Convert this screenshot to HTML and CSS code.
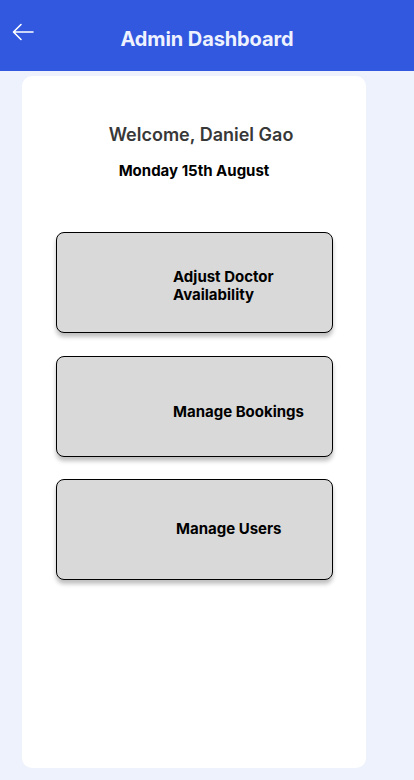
FILE: index.html
```html
<!DOCTYPE html>
<html>
<head>
<meta charset="utf-8">
<link rel="stylesheet" href="styles.css">
</head>
<body>
<header class="topbar">
  <svg class="back" width="22" height="18" viewBox="0 0 22 18"><path d="M21 9H2M9 1.5L1.5 9L9 16.5" fill="none" stroke="#fff" stroke-width="1.6" stroke-linecap="round" stroke-linejoin="round"/></svg>
  <h1 class="title">Admin Dashboard</h1>
</header>
<main class="card">
  <h2 class="welcome">Welcome, Daniel Gao</h2>
  <p class="date">Monday 15th August</p>
  <div class="actions">
    <button class="action"><span class="label label-doctor">Adjust Doctor<br>Availability</span></button>
    <button class="action"><span class="label label-bookings">Manage Bookings</span></button>
    <button class="action"><span class="label label-users">Manage Users</span></button>
  </div>
</main>
</body>
</html>
```
FILE: styles.css
```css
html, body {
  margin: 0;
  padding: 0;
}
body {
  width: 414px;
  height: 780px;
  background: #eef2fd;
  font-family: Inter, "Noto Sans", sans-serif;
  overflow: hidden;
}
.topbar {
  position: relative;
  height: 71px;
  background: #3158df;
  display: flex;
  align-items: center;
  justify-content: center;
}
.back {
  position: absolute;
  left: 12px;
  top: 23px;
}
.title {
  margin: 0;
  padding-top: 6px;
  color: #eef2ff;
  font-size: 20px;
  font-weight: 700;
  letter-spacing: -0.1px;
}
.card {
  margin: 5px 0 0 22px;
  width: 344px;
  height: 692px;
  background: #fff;
  border-radius: 10px;
  display: flex;
  flex-direction: column;
  align-items: center;
  box-sizing: border-box;
  padding-top: 48px;
}
.welcome {
  margin: 0 0 0 14px;
  font-size: 18px;
  font-weight: 600;
  color: #383838;
  line-height: 22px;
}
.date {
  margin: 16px 0 0 0;
  font-size: 15px;
  font-weight: 700;
  color: #000;
  line-height: 18px;
}
.actions {
  margin-top: 52px;
  margin-left: 1px;
  display: flex;
  flex-direction: column;
  gap: 22px;
}
.action {
  width: 277px;
  height: 101px;
  background: #d9d9d9;
  border: 1px solid #000;
  border-radius: 8px;
  box-shadow: 0 4px 4px rgba(0, 0, 0, 0.25);
  display: flex;
  align-items: center;
  padding: 0 0 0 116px;
  font-family: Inter, "Noto Sans", sans-serif;
  font-size: 15px;
  font-weight: 700;
  color: #000;
  text-align: left;
  line-height: 18px;
  box-sizing: border-box;
}
.action:first-child {
  margin-bottom: 1px;
}
.label-doctor {
  margin-top: 6px;
}
.label-bookings {
  margin-top: 10px;
}
.label-users {
  margin-left: 3px;
  margin-bottom: 2px;
}
```
